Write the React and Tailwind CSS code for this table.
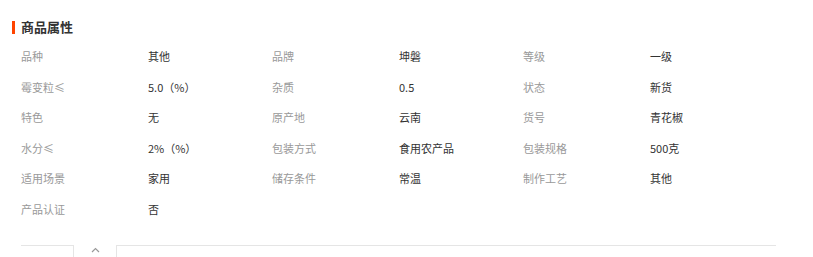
import { Fragment } from "react";

const attrs = [
  ["品种", "其他"],
  ["品牌", "坤磐"],
  ["等级", "一级"],
  ["霉变粒≤", "5.0（%）"],
  ["杂质", "0.5"],
  ["状态", "新货"],
  ["特色", "无"],
  ["原产地", "云南"],
  ["货号", "青花椒"],
  ["水分≤", "2%（%）"],
  ["包装方式", "食用农产品"],
  ["包装规格", "500克"],
  ["适用场景", "家用"],
  ["储存条件", "常温"],
  ["制作工艺", "其他"],
  ["产品认证", "否"],
];

export default function App() {
  return (
    <div className="w-[813px] h-[257px] overflow-hidden bg-white font-['Noto_Sans_CJK_SC','Noto_Sans',sans-serif]">
      <div className="flex items-center h-[14px] mt-[20px] pl-[12px]">
        <span className="w-[3px] h-[13px] bg-[#ff4400]" />
        <h2 className="ml-[6px] text-[13px] font-bold text-[#333] leading-none -mt-[1px]">商品属性</h2>
      </div>
      <div className="grid grid-cols-[127px_124px_127px_124px_127px_1fr] pl-[21px] mt-[7px] text-[11px]">
        {attrs.map(([k, v]) => (
          <Fragment key={k}>
            <div className="h-[30.6px] flex items-center text-[#999]">{k}</div>
            <div className="h-[30.6px] flex items-center text-[#333]">{v}</div>
          </Fragment>
        ))}
      </div>
      <div className="flex mt-[20px] ml-[21px] h-[20px]">
        <div className="w-[53px] border-t border-r border-[#e5e5e5]" />
        <div className="w-[42px] flex justify-center pt-[1px]">
          <svg width="9" height="6" viewBox="0 0 9 6" className="mt-[1px]">
            <path d="M1 5 L4.5 1.5 L8 5" fill="none" stroke="#999" strokeWidth="1.2" />
          </svg>
        </div>
        <div className="w-[660px] border-t border-l border-[#e5e5e5]" />
      </div>
    </div>
  );
}
